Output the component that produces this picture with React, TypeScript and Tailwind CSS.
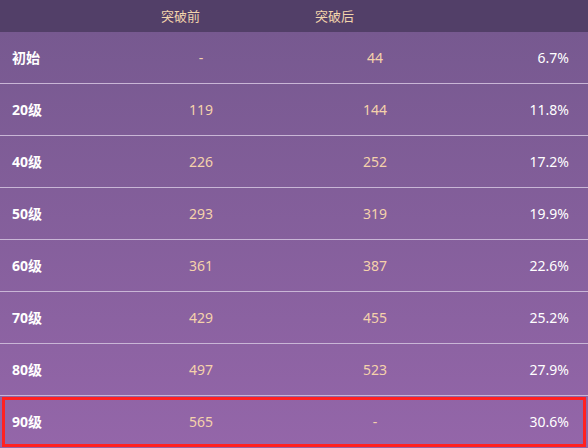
const rows = [
  { lv: "初始", before: "-", after: "44", pct: "6.7%" },
  { lv: "20级", before: "119", after: "144", pct: "11.8%" },
  { lv: "40级", before: "226", after: "252", pct: "17.2%" },
  { lv: "50级", before: "293", after: "319", pct: "19.9%" },
  { lv: "60级", before: "361", after: "387", pct: "22.6%" },
  { lv: "70级", before: "429", after: "455", pct: "25.2%" },
  { lv: "80级", before: "497", after: "523", pct: "27.9%" },
  { lv: "90级", before: "565", after: "-", pct: "30.6%" },
];

const grid = "grid grid-cols-[140px_122px_226px_100px] items-center";

export default function App() {
  return (
    <div
      className="w-[588px] h-[448px] overflow-hidden text-sm"
      style={{ fontFamily: '"Noto Sans", "Noto Sans CJK SC", sans-serif' }}
    >
      {/* header */}
      <div className={`${grid} h-8 bg-[#523f68] text-[13px] text-[#f3d5ac]`}>
        <div />
        <div className="pl-[21px]">突破前</div>
        <div className="pl-[53px]">突破后</div>
        <div />
      </div>

      <div className="bg-linear-to-b from-[#775990] to-[#9466a9]">
        {rows.map((r, i) => {
          const last = i === rows.length - 1;
          return (
            <div
              key={r.lv}
              className={`${grid} relative h-[52px] ${last ? "" : "border-b border-[#c9b6d6]"}`}
            >
              <div className="pl-3 font-bold text-white">{r.lv}</div>
              <div className="text-center text-[#f5d2ab]">{r.before}</div>
              <div className="text-center text-[#f5d2ab]">{r.after}</div>
              <div className="text-right pr-[19px] text-white">{r.pct}</div>
              {last && (
                <div className="absolute left-[2px] right-[2px] top-[1px] bottom-[1px] border-[3px] border-[#ff2121] pointer-events-none" />
              )}
            </div>
          );
        })}
      </div>
    </div>
  );
}
